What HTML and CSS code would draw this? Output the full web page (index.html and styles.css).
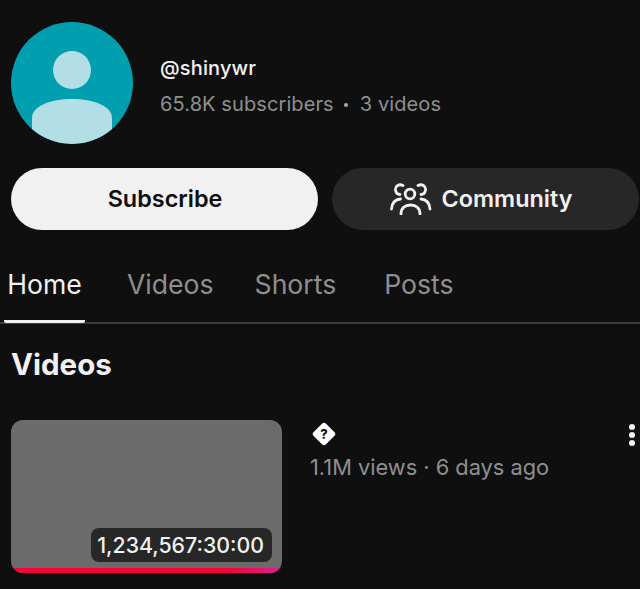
FILE: index.html
```html
<!DOCTYPE html>
<html lang="en">
<head>
  <meta charset="UTF-8">
  <title>@shinywr</title>
  <link rel="stylesheet" href="styles.css">
</head>
<body>
  <div class="page">
    <!-- Channel header -->
    <div class="channel">
      <svg class="avatar" viewBox="0 0 122 122">
        <circle cx="61" cy="61" r="61" fill="#009fb0"/>
        <circle cx="61" cy="48" r="19" fill="#b2dfe6"/>
        <path d="M21 107 V96 C21 84 40 77 61 77 C82 77 101 84 101 96 V107 A61 61 0 0 1 21 107 Z" fill="#b2dfe6"/>
      </svg>
      <div class="channel-info">
        <div class="handle">@shinywr</div>
        <div class="stats"><span>65.8K subscribers</span><span class="dot"></span><span>3 videos</span></div>
      </div>
    </div>

    <!-- Buttons -->
    <div class="actions">
      <button class="btn btn-light">Subscribe</button>
      <button class="btn btn-dark">
        <svg class="people" viewBox="0 0 42 32" fill="none" stroke="#f1f1f1" stroke-width="2.8" stroke-linecap="round">
          <circle cx="20" cy="11" r="4.800"/>
          <path d="M11 31 C11 25 15 22 20.500 22 C26 22 30 25 30 31"/>
          <path d="M13 2.500 C9 0.500 5 3 5.500 7 C6 10 8 11.500 10 11.500"/>
          <path d="M28 2.500 C32 0.500 36 3 35.500 7 C35 10 33 11.500 31 11.500"/>
          <path d="M1.500 26 C2 20 5.500 16.500 10.500 16"/>
          <path d="M40 26 C39.500 20 36 16.500 31 16"/>
        </svg>
        Community
      </button>
    </div>

    <!-- Tabs -->
    <div class="tabs">
      <div class="tab tab-home active">Home</div>
      <div class="tab tab-videos">Videos</div>
      <div class="tab tab-shorts">Shorts</div>
      <div class="tab tab-posts">Posts</div>
    </div>

    <h2 class="section-title">Videos</h2>

    <!-- Video row -->
    <div class="video">
      <div class="thumb">
        <span class="duration">1,234,567:30:00</span>
        <div class="progress"></div>
      </div>
      <div class="video-info">
        <svg class="unknown" viewBox="0 0 24 24">
          <rect x="4.500" y="4.500" width="15" height="15" rx="2.500" fill="#fff" transform="rotate(45 12 12)"/>
          <text x="12" y="16" text-anchor="middle" class="unknown-mark">?</text>
        </svg>
        <div class="views">1.1M views · 6 days ago</div>
      </div>
      <div class="more"><i></i><i></i><i></i></div>
    </div>
  </div>
</body>
</html>
```

FILE: styles.css
```css
* {
  margin: 0;
  padding: 0;
  box-sizing: border-box;
}

body {
  background-color: #0f0f0f;
  font-family: 'Inter', 'Liberation Sans', sans-serif;
  color: #f1f1f1;
  overflow: hidden;
}

.page {
  width: 640px;
  height: 589px;
  overflow: hidden;
}

.channel {
  display: flex;
  align-items: center;
  gap: 27px;
  padding: 22px 0 0 11px;
}

.avatar {
  width: 122px;
  height: 122px;
  flex: none;
}

.channel-info {
  padding-top: 6px;
}

.handle {
  font-size: 20px;
  font-weight: 500;
  line-height: 24px;
  letter-spacing: 0.15px;
  margin-bottom: 12px;
}

.stats {
  display: flex;
  align-items: center;
  font-size: 20px;
  line-height: 24px;
  letter-spacing: 0.1px;
  color: #8f8f8f;
}

.dot {
  width: 4px;
  height: 4px;
  border-radius: 50%;
  background-color: #aaa;
  margin: 2px 12px 0 10px;
}

.actions {
  display: flex;
  gap: 14px;
  padding: 24px 0 0 11px;
}

.btn {
  flex: none;
  width: 307px;
  height: 62px;
  border: none;
  border-radius: 31px;
  font-family: inherit;
  font-size: 23.4px;
  font-weight: 600;
  display: flex;
  align-items: center;
  justify-content: center;
  padding-bottom: 1px;
}

.btn-light {
  background-color: #f1f1f1;
  color: #0f0f0f;
  padding-left: 1px;
}

.btn-dark {
  background-color: #272727;
  color: #f1f1f1;
  gap: 10px;
  padding-right: 9px;
}

.people {
  width: 42px;
  height: 32px;
}

.tabs {
  display: flex;
  height: 94px;
  border-bottom: 2px solid #3a3a3a;
  padding: 0 0 0 4px;
}

.tab {
  font-size: 26.6px;
  line-height: 32px;
  padding-top: 38px;
  color: #8f8f8f;
  font-weight: 400;
  height: 93px;
}

.tab-home {
  width: 81px;
  text-align: center;
  color: #f1f1f1;
  border-bottom: 3px solid #f1f1f1;
  border-radius: 0 0 2px 2px;
}

.tab-videos {
  margin-left: 42px;
}

.tab-shorts {
  margin-left: 41px;
}

.tab-posts {
  margin-left: 48px;
}

.section-title {
  font-size: 29.5px;
  font-weight: 700;
  line-height: 36px;
  padding: 22px 0 0 11px;
}

.video {
  display: flex;
  padding: 38px 0 0 11px;
}

.thumb {
  position: relative;
  width: 271px;
  height: 153px;
  flex: none;
  background-color: #6b6b6b;
  border-radius: 12px;
  overflow: hidden;
}

.duration {
  position: absolute;
  right: 10px;
  bottom: 11px;
  height: 34px;
  padding: 0 8px 0 6px;
  background-color: #272727;
  border-radius: 8px;
  font-size: 21.3px;
  line-height: 34px;
  font-weight: 500;
  white-space: nowrap;
}

.progress {
  position: absolute;
  left: 0;
  right: 0;
  bottom: 0;
  height: 5px;
  background: linear-gradient(90deg, #f5003c 0%, #f5003c 80%, #e0218f 100%);
}

.video-info {
  padding: 0 0 0 28px;
  flex: 1;
}

.unknown {
  display: block;
  width: 28px;
  height: 28px;
}

.unknown-mark {
  font-size: 11px;
  font-weight: 800;
  fill: #0f0f0f;
}

.views {
  font-size: 21.8px;
  line-height: 26px;
  color: #8f8f8f;
  margin-top: 6px;
}

.more {
  display: flex;
  flex-direction: column;
  gap: 2px;
  padding: 4px 5px 0 0;
}

.more i {
  display: block;
  width: 6px;
  height: 6px;
  border-radius: 50%;
  background-color: #f1f1f1;
}
```
